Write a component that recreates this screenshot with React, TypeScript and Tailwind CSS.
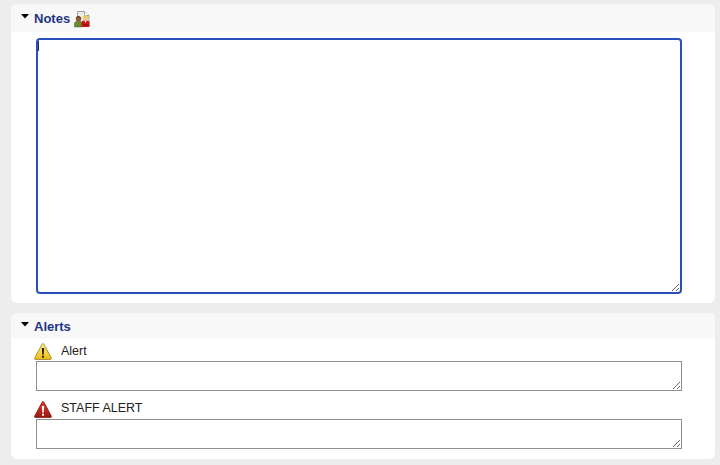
import React from 'react';

const Caret = () => (
  <svg width="8" height="6" viewBox="0 0 8 6" className="shrink-0">
    <path d="M0 1h8L4 5.500z" fill="#000" />
  </svg>
);

const PeopleIcon = () => (
  <svg width="17" height="18" viewBox="0 0 17 18" className="shrink-0">
    <path d="M3.500 1.500h7l4.500 4v11h-11.500z" fill="#ececec" stroke="#a0a0a0" />
    <path d="M10.500 1.500v4h4.500" fill="#fff" stroke="#a0a0a0" />
    <circle cx="4.500" cy="9" r="2.700" fill="#8f5f32" />
    <path d="M1.800 8.500c.3-3 5-3 5.400 0l-1.200-1.200h-3z" fill="#33230f" />
    <path d="M.5 17v-4c0-1 1.500-1.400 4-1.400s3.500 .4 3.500 1.400v4z" fill="#6c8a30" stroke="#50652a" strokeWidth=".5" />
    <circle cx="11.500" cy="8" r="2.500" fill="#f0c680" />
    <path d="M8.700 8.500c-.2-4.200 5.800-4.200 5.600 0l-1-1.800h-3.600z" fill="#ecc92f" />
    <path d="M7.500 17v-5c0-1 1.800-1.500 4-1.500s4 .5 4 1.500v5z" fill="#c8161d" />
    <path d="M10.300 10.500h2.400l-1.200 2.400z" fill="#fff" />
    <rect x="9.500" y="14" width="4" height="1.500" fill="#8f1015" />
  </svg>
);

const WarningIcon = ({ light, dark, edge, mark }: { light: string; dark: string; edge: string; mark: string }) => {
  const id = `g${light.slice(1)}`;
  return (
    <svg width="18" height="17" viewBox="0 0 18 17" className="shrink-0">
      <defs>
        <linearGradient id={id} x1="0" y1="0" x2="0" y2="1">
          <stop offset="0" stopColor={light} />
          <stop offset="1" stopColor={dark} />
        </linearGradient>
      </defs>
      <path d="M9 .6c.4 0 .7.2.9.6l7.500 14c.3.6 0 1.200-.7 1.200H1.300c-.7 0-1-.6-.7-1.200l7.500-14c.2-.4.5-.6.9-.6z" fill={`url(#${id})`} stroke={edge} strokeWidth=".8" />
      <path d="M7.800 5h2.400l-.5 6.800H8.300z" fill={mark} />
      <rect x="8" y="12.700" width="2" height="2" fill={mark} />
    </svg>
  );
};

export default function App() {
  return (
    <div className="w-[720px] h-[465px] overflow-hidden bg-[#ededed] pt-1 pl-[11px] pr-[5px] flex flex-col gap-[10px] font-['Liberation_Sans',sans-serif]">
      <section className="h-[299px] bg-white rounded-md">
        <div className="h-7 bg-[#f8f8f8] rounded-t-md flex items-center pl-[10px] gap-[5px]">
          <span className="-mt-[4px]"><Caret /></span>
          <h2 className="text-[13px] font-bold text-[#1c3585] leading-none">Notes</h2>
          <span className="-ml-[1px] mt-[1px]"><PeopleIcon /></span>
        </div>
        <div className="pt-[6px] pl-[25px]">
          <div className="relative w-[646px] h-[256px]">
            <textarea className="block w-[646px] h-[256px] bg-white border-2 border-[#2a4fbd] rounded-[4px] outline-none" />
            <span className="absolute left-[2px] top-[3px] w-px h-[10px] bg-[#333]" />
          </div>
        </div>
      </section>

      <section className="h-[146px] bg-white rounded-md">
        <div className="h-[26px] bg-[#f8f8f8] rounded-t-md flex items-center pl-[10px] gap-[5px]">
          <span className="-mt-[4px]"><Caret /></span>
          <h2 className="text-[13px] font-bold text-[#1c3585] leading-none">Alerts</h2>
        </div>
        <div className="pl-[25px]">
          <div className="h-[22px] pt-[4px] flex items-start gap-[9px] text-[12.5px] text-[#222]">
            <span className="-ml-[2px] block"><WarningIcon light="#fff58a" dark="#f2bb0c" edge="#8f7a2a" mark="#2a2208" /></span>
            <span className="leading-4">Alert</span>
          </div>
          <textarea className="block w-[646px] h-[30px] bg-white border border-[#8f8f8f] outline-none" />
          <div className="h-[28px] pt-[10px] flex items-start gap-[9px] text-[12.5px] text-[#222]">
            <span className="-ml-[2px] block"><WarningIcon light="#e4392e" dark="#981a13" edge="#7d1712" mark="#ffffff" /></span>
            <span className="leading-4 -mt-[1px]">STAFF ALERT</span>
          </div>
          <textarea className="block w-[646px] h-[30px] bg-white border border-[#8f8f8f] outline-none" />
        </div>
      </section>
    </div>
  );
}
